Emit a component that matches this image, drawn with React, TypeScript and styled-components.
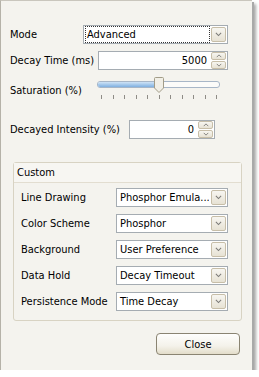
import React from 'react';
import styled, { createGlobalStyle } from 'styled-components';

const GlobalStyle = createGlobalStyle`
  html, body {
    margin: 0;
    padding: 0;
    background: #ffffff;
  }
  body {
    font-family: Tahoma, 'DejaVu Sans Condensed', 'Liberation Sans', sans-serif;
    font-size: 11px;
    color: #000;
  }
`;

const Window = styled.div`
  width: 252px;
  height: 370px;
  box-sizing: border-box;
  background: #f4f3ee;
  border-left: 1px solid #b5b2a8;
  border-top: 1px solid #c9c6bd;
  box-shadow: 2px 2px 0 #a9a9a9, 4px 4px 3px rgba(0, 0, 0, 0.35);
  padding: 24px 0 0 9px;
  display: flex;
  flex-direction: column;
`;

const Row = styled.div<{ $right: number; $top?: number }>`
  display: flex;
  align-items: center;
  height: 19px;
  width: ${({ $right }) => 218 - $right}px;
  margin-top: ${({ $top = 0 }) => $top}px;
`;

const Label = styled.span`
  flex: 1;
  white-space: nowrap;
`;

const Field = styled.div<{ $w: number }>`
  width: ${({ $w }) => $w}px;
  height: 19px;
  box-sizing: border-box;
  background: #fff;
  border: 1px solid #a5acb2;
  display: flex;
  align-items: center;
  padding: 1px;
`;

const FieldText = styled.div<{ $focus?: boolean; $align?: string }>`
  flex: 1;
  height: 15px;
  line-height: 15px;
  padding: 0 ${({ $align }) => ($align === 'right' ? '2px' : '0 0 1px')};
  text-align: ${({ $align = 'left' }) => $align};
  white-space: nowrap;
  overflow: hidden;
  border: 1px dotted ${({ $focus }) => ($focus ? '#333' : 'transparent')};
  margin-right: 1px;
`;

const DropButton = styled.div`
  width: 15px;
  height: 15px;
  box-sizing: border-box;
  border: 1px solid #c7bea8;
  border-radius: 2px;
  background: linear-gradient(#f7f6f1, #e7e2d4);
  display: flex;
  align-items: center;
  justify-content: center;
`;

const SpinBox = styled.div`
  width: 15px;
  height: 17px;
  display: flex;
  flex-direction: column;
  gap: 1px;
`;

const SpinButton = styled.div`
  flex: 1;
  box-sizing: border-box;
  border: 1px solid #c7bea8;
  border-radius: 2px;
  background: linear-gradient(#f7f6f1, #e7e2d4);
  display: flex;
  align-items: center;
  justify-content: center;
`;

const Chevron = ({ up = false, size = 7 }: { up?: boolean; size?: number }) => (
  <svg width={size} height={size / 2 + 1} viewBox="0 0 8 5">
    <path
      d={up ? 'M1 4 L4 1 L7 4' : 'M1 1 L4 4 L7 1'}
      fill="none"
      stroke="#7c7b78"
      strokeWidth="1.2"
    />
  </svg>
);

const Combo = ({ w, text, focus }: { w: number; text: string; focus?: boolean }) => (
  <Field $w={w}>
    <FieldText $focus={focus}>{text}</FieldText>
    <DropButton>
      <Chevron />
    </DropButton>
  </Field>
);

const Spinner = ({ w, value }: { w: number; value: string }) => (
  <Field $w={w}>
    <FieldText $align="right">{value}</FieldText>
    <SpinBox>
      <SpinButton>
        <Chevron up size={6} />
      </SpinButton>
      <SpinButton>
        <Chevron size={6} />
      </SpinButton>
    </SpinBox>
  </Field>
);

const SliderRow = styled.div`
  display: flex;
  align-items: center;
  width: 212px;
  height: 26px;
  margin-top: 7px;
`;

const Slider = styled.div`
  width: 127px;
  height: 26px;
  display: flex;
  flex-direction: column;
  position: relative;
`;

const Track = styled.div`
  margin: 4px 2px 0 2px;
  height: 5px;
  border: 1px solid #a7b6c7;
  border-radius: 3px;
  background: #fbfbf9;
  overflow: hidden;
  display: flex;
`;

const TrackFill = styled.div`
  background: linear-gradient(#cfe3f6, #7fb0e0);
`;

const Thumb = styled.div`
  position: absolute;
  top: 0;
  width: 9px;
  height: 16px;
  margin-left: -5px;
`;

const Ticks = styled.div`
  display: flex;
  justify-content: space-between;
  margin: 7px 5px 0 6px;
`;

const Tick = styled.span`
  width: 1px;
  height: 4px;
  background: #8e8c86;
`;

const Group = styled.div`
  width: 229px;
  margin: 23px 0 0 3px;
  box-sizing: border-box;
  border: 1px solid #d8d3c3;
  border-radius: 3px;
  background: #f4f3ee;
  padding-bottom: 9px;
`;

const GroupHeader = styled.div`
  height: 19px;
  line-height: 19px;
  padding-left: 3px;
  background: #f7f6f2;
  border-bottom: 1px solid #e2ddd0;
`;

const GroupBody = styled.div`
  display: flex;
  flex-direction: column;
  gap: 7px;
  padding: 5px 0 0 7px;
`;

const GroupRow = styled.div`
  display: flex;
  align-items: center;
  height: 19px;
  width: 207px;
`;

const Footer = styled.div`
  display: flex;
  justify-content: flex-end;
  width: 230px;
  margin-top: 12px;
`;

const Button = styled.button`
  width: 84px;
  height: 22px;
  font: inherit;
  color: #000;
  border: 1px solid #8a8472;
  border-radius: 4px;
  background: linear-gradient(#fefefd 0%, #f4f2ea 60%, #e3ddca 100%);
  padding: 0;
`;

const customRows: [string, string][] = [
  ['Line Drawing', 'Phosphor Emula...'],
  ['Color Scheme', 'Phosphor'],
  ['Background', 'User Preference'],
  ['Data Hold', 'Decay Timeout'],
  ['Persistence Mode', 'Time Decay'],
];

const saturation = 0.5;

export default function App() {
  const ticks = Array.from({ length: 11 }, (_, i) => <Tick key={i} />);
  return (
    <>
      <GlobalStyle />
      <Window>
        <Row $right={0}>
          <Label>Mode</Label>
          <Combo w={145} text="Advanced" focus />
        </Row>
        <Row $right={0} $top={7}>
          <Label>Decay Time (ms)</Label>
          <Spinner w={130} value="5000" />
        </Row>
        <SliderRow>
          <Label>Saturation (%)</Label>
          <Slider>
            <Track>
              <TrackFill style={{ width: `${saturation * 100}%` }} />
            </Track>
            <Thumb style={{ left: `${4 + saturation * 119}px` }}>
              <svg width="10" height="16" viewBox="0 0 10 16">
                <path
                  d="M1.5 0.5 H8.5 Q9.5 0.5 9.5 1.5 V11 L5 15.5 L0.5 11 V1.5 Q0.5 0.5 1.5 0.5 Z"
                  fill="#f1efe6"
                  stroke="#a29c88"
                />
              </svg>
            </Thumb>
            <Ticks>{ticks}</Ticks>
          </Slider>
        </SliderRow>
        <Row $right={13} $top={17}>
          <Label>Decayed Intensity (%)</Label>
          <Spinner w={86} value="0" />
        </Row>
        <Group>
          <GroupHeader>Custom</GroupHeader>
          <GroupBody>
            {customRows.map(([label, value]) => (
              <GroupRow key={label}>
                <Label>{label}</Label>
                <Combo w={112} text={value} />
              </GroupRow>
            ))}
          </GroupBody>
        </Group>
        <Footer>
          <Button>Close</Button>
        </Footer>
      </Window>
    </>
  );
}
